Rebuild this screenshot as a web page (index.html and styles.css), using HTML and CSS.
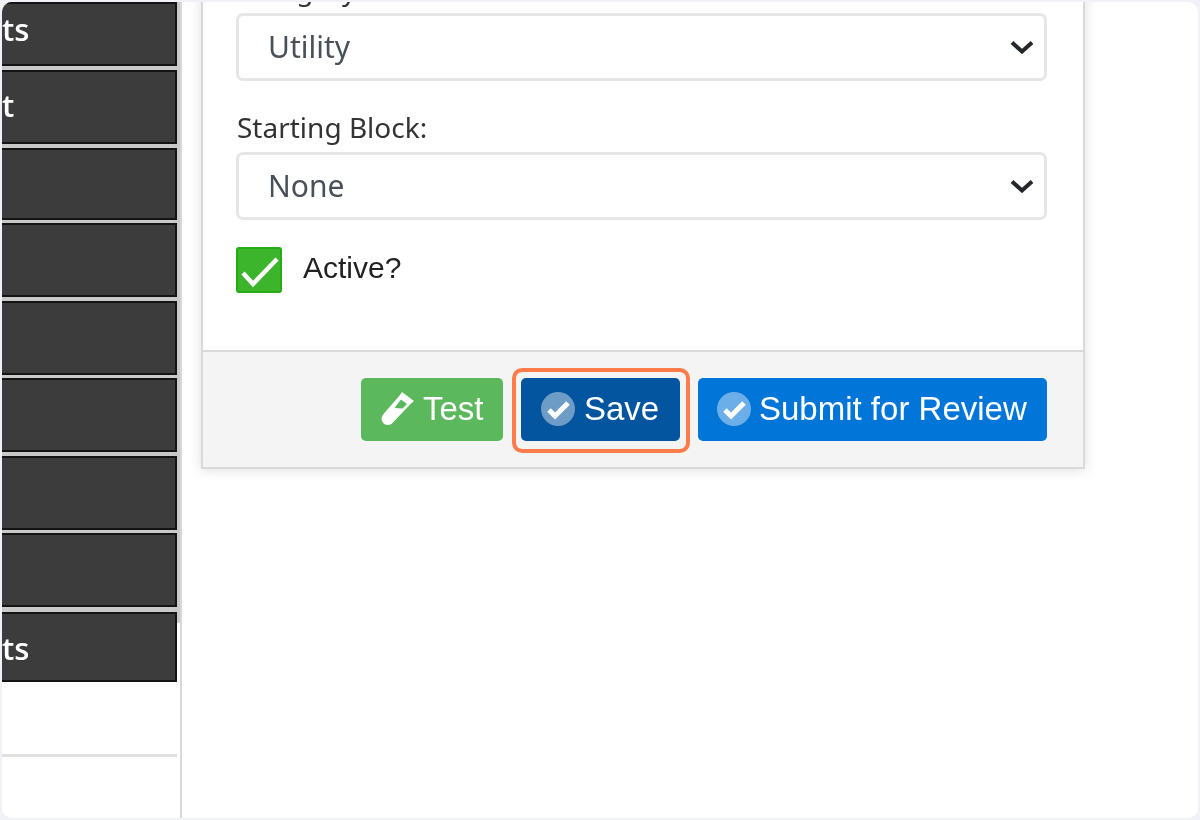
FILE: index.html
```html
<!DOCTYPE html>
<html lang="en">
<head>
<meta charset="utf-8">
<title>Save</title>
<link rel="stylesheet" href="styles.css">
</head>
<body>
<div class="frame">
  <aside class="sidebar">
    <nav class="menu">
      <div class="item h64"><span class="label up">ts</span></div>
      <div class="item h74"><span class="label mid">t</span></div>
      <div class="item h72 tight"></div>
      <div class="item h74"></div>
      <div class="item h74 tight"></div>
      <div class="item h74"></div>
      <div class="item h74 tight"></div>
      <div class="item h74 wide"></div>
      <div class="item h70"><span class="label down">ts</span></div>
    </nav>
    <div class="side-rule"></div>
  </aside>
  <main class="main">
    <section class="card">
      <div class="card-body">
        <label class="field-label">Category:</label>
        <div class="select"><span>Utility</span>
          <svg class="chev" viewBox="0 0 24 14" aria-hidden="true"><path d="M2 2.500 12 11.500 22 2.500" /></svg>
        </div>
        <label class="field-label second">Starting Block:</label>
        <div class="select"><span>None</span>
          <svg class="chev" viewBox="0 0 24 14" aria-hidden="true"><path d="M2 2.500 12 11.500 22 2.500" /></svg>
        </div>
        <div class="check-row">
          <span class="check">
            <svg viewBox="0 0 42 42" aria-hidden="true"><path d="M5 24 15 35 39 10" /></svg>
          </span>
          <span class="check-label">Active?</span>
        </div>
      </div>
      <footer class="card-foot">
        <button class="btn btn-test">
          <svg class="ico-tube" viewBox="0 0 34 36" aria-hidden="true">
            <path class="tube-body" d="M21 1 33 10 30 12.500 10.500 33C7 35 3 34 1.500 31 0 28 .5 25 2.500 23L19 4ZM20 8.500 13.500 17 21.500 17.500 26 13Z" />
          </svg>
          <span>Test</span>
        </button>
        <div class="highlight">
          <button class="btn btn-save">
            <svg class="ico-ok" viewBox="0 0 34 34" aria-hidden="true"><circle cx="17" cy="17" r="17" /><path d="M8 18 14 24 27 11" /></svg>
            <span>Save</span>
          </button>
        </div>
        <button class="btn btn-submit">
          <svg class="ico-ok" viewBox="0 0 34 34" aria-hidden="true"><circle cx="17" cy="17" r="17" /><path d="M8 18 14 24 27 11" /></svg>
          <span>Submit for Review</span>
        </button>
      </footer>
    </section>
  </main>
</div>
</body>
</html>
```
FILE: styles.css
```css
* { box-sizing: border-box; }
html, body { margin: 0; padding: 0; height: 100%; background: #f1f1f8; overflow: hidden; }
body { padding: 2px; }
.frame {
  display: flex;
  width: 1196px;
  height: 816px;
  background: #fff;
  border-radius: 10px;
  overflow: hidden;
  filter: blur(.45px);
}
.sidebar {
  flex: 0 0 180px;
  width: 180px;
  height: 100%;
  border-right: 2px solid #d8d8d8;
  overflow: hidden;
}
.menu {
  display: flex;
  flex-direction: column;
  width: 178px;
  padding-right: 3px;
  background: linear-gradient(#c9c9c9 0 621px, #fff 0);
}
.item {
  display: flex;
  align-items: center;
  background: #3c3c3c;
  border: 2px solid #141414;
  border-left: 0;
  margin-bottom: 4px;
  overflow: hidden;
}
.item.tight { margin-bottom: 3px; }
.item.wide { margin-bottom: 5px; }
.item:last-child { margin-bottom: 0; }
.h64 { height: 64px; }
.h74 { height: 74px; }
.h72 { height: 72px; }
.h70 { height: 70px; }
.label {
  color: #fff;
  font: 600 31px/1 "Open Sans", sans-serif;
  white-space: nowrap;
}
.label.up { margin-top: -10px; }
.label.mid { margin-top: -4px; }
.label.down { margin-top: 2px; }
.side-rule { height: 3px; margin-top: 72px; width: 175px; background: #e0e0e0; }
.main { flex: 1; height: 100%; overflow: hidden; padding-left: 19px; }
.card {
  width: 884px;
  margin-top: -52px;
  background: #fff;
  border: 2px solid #d9d9d9;
  border-top: 0;
  box-shadow: 0 1px 12px rgba(0,0,0,.13);
}
.card-body { padding: 23px 36px 57px 33px; }
.field-label {
  display: block;
  margin: 0 0 8px 1px;
  font: 400 28px/32px "Noto Sans", sans-serif;
  color: #333;
}
.field-label.second { margin-top: 30px; margin-bottom: 9px; }
.select {
  display: flex;
  align-items: center;
  justify-content: space-between;
  height: 68px;
  padding: 0 10px 0 29px;
  background: #fff;
  border: 3px solid #e6e6e6;
  border-radius: 7px;
  font: 400 30px/1 "Noto Sans", sans-serif;
  color: #495057;
}
.chev { width: 24px; height: 14px; fill: none; stroke: #23272b; stroke-width: 4; }
.check-row { display: flex; align-items: center; gap: 21px; margin-top: 27px; }
.check {
  flex: none;
  width: 46px;
  height: 46px;
  background: #3cb52c;
  border: 2px solid #24ac16;
  border-radius: 3px;
}
.check svg { display: block; width: 42px; height: 42px; fill: none; stroke: #fff; stroke-width: 4.500; }
.check-label { font: 400 30px/1 "Liberation Sans", sans-serif; color: #222; margin-top: -4px; }
.card-foot {
  display: flex;
  justify-content: flex-end;
  align-items: center;
  gap: 18px;
  height: 117px;
  padding: 0 36px 0 0;
  background: #f4f4f4;
  border-top: 2px solid #d9d9d9;
}
.btn {
  display: flex;
  align-items: center;
  height: 63px;
  border: 0;
  border-radius: 5px;
  color: #fff;
  font: 400 33px/1 "Liberation Sans", sans-serif;
  padding: 0;
}
.btn span { margin-top: -2px; }
.btn-test { width: 142px; background: #5cb85c; padding-left: 20px; gap: 8px; }
.btn-save { width: 159px; background: #04559f; padding-left: 20px; gap: 9px; }
.btn-submit { width: 349px; background: #0275d8; padding-left: 19px; gap: 8px; }
.highlight {
  position: relative;
  width: 159px;
  height: 63px;
}
.highlight::after {
  content: "";
  position: absolute;
  inset: -10px -10px -12px -9px;
  border: 4px solid #ff7b4a;
  border-radius: 10px;
  pointer-events: none;
}
.ico-ok { flex: none; width: 34px; height: 34px; margin-top: -2px; }
.ico-ok circle { fill: rgba(255,255,255,.42); }
.ico-ok path { fill: none; stroke: #fff; stroke-width: 5; }
.ico-tube { flex: none; width: 34px; height: 36px; margin-top: -2px; }
.tube-body { fill: #fff; fill-rule: evenodd; }
```
